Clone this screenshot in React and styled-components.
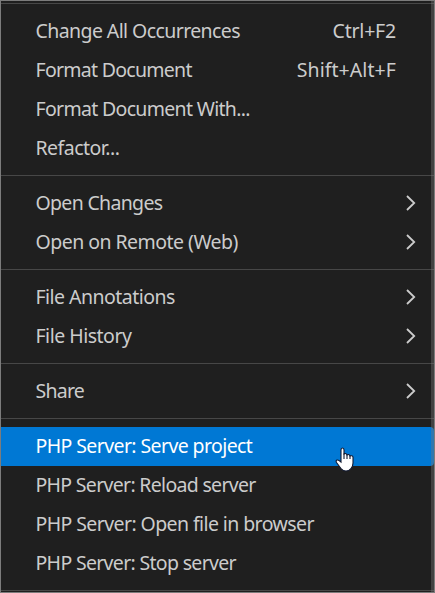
import React from "react";
import styled, { createGlobalStyle } from "styled-components";

const GlobalStyle = createGlobalStyle`
  body { margin: 0; background: #1f1f1f; overflow: hidden; }
  * { box-sizing: border-box; }
`;

const Menu = styled.div`
  position: relative;
  width: 435px;
  height: 593px;
  padding-top: 2px;
  border: 1px solid #7c7c7c;
  background: #1f1f1f;
  color: #cccccc;
  font-family: "Noto Sans", sans-serif;
  font-size: 19.5px;
`;

const Separator = styled.div`
  height: 1px;
  margin: 7px 0 8px;
  background: #474747;

  &:first-child { margin-top: 0; }
`;

const Row = styled.div`
  display: flex;
  align-items: center;
  justify-content: space-between;
  height: 39px;
  padding: 0 38px 2px 34.5px;
  line-height: 37px;
  white-space: nowrap;
  border-radius: 0 4px 4px 0;
  color: ${(p) => (p.$active ? "#ffffff" : "inherit")};
  background: ${(p) => (p.$active ? "#0078d4" : "transparent")};
`;

const Label = styled.span`
  letter-spacing: ${(p) => p.$tracking}px;
`;

const Arrow = styled.svg`
  width: 10px;
  height: 16px;
  margin-right: -20px;
  fill: none;
  stroke: #cccccc;
  stroke-width: 1.8;
`;

const Scrollbar = styled.div`
  position: absolute;
  top: 0;
  right: 0;
  bottom: 0;
  width: 3px;
  background: rgba(121, 121, 121, 0.4);
`;

const Pointer = styled.svg`
  position: absolute;
  left: 334px;
  top: 446px;
  width: 20px;
  height: 25px;
`;

const groups = [
  [
    { label: "Change All Occurrences", tracking: -0.59, keys: "Ctrl+F2", keyTracking: -0.2 },
    { label: "Format Document", tracking: -0.72, keys: "Shift+Alt+F", keyTracking: 0.07 },
    { label: "Format Document With...", tracking: -0.68 },
    { label: "Refactor...", tracking: -0.52 },
  ],
  [
    { label: "Open Changes", tracking: -0.68, submenu: true },
    { label: "Open on Remote (Web)", tracking: -0.53, submenu: true },
  ],
  [
    { label: "File Annotations", tracking: -0.53, submenu: true },
    { label: "File History", tracking: -0.5, submenu: true },
  ],
  [{ label: "Share", tracking: -0.75, submenu: true }],
  [
    { label: "PHP Server: Serve project", tracking: -0.6, active: true },
    { label: "PHP Server: Reload server", tracking: -0.69 },
    { label: "PHP Server: Open file in browser", tracking: -0.59 },
    { label: "PHP Server: Stop server", tracking: -0.68 },
  ],
];

function MenuItem({ item }) {
  return (
    <Row $active={item.active}>
      <Label $tracking={item.tracking}>{item.label}</Label>
      {item.keys && <Label $tracking={item.keyTracking}>{item.keys}</Label>}
      {item.submenu && (
        <Arrow viewBox="0 0 10 16"><path d="M1 1L8.2 8L1 15" /></Arrow>
      )}
    </Row>
  );
}

export default function App() {
  return (
    <>
      <GlobalStyle />
      <Menu>
        <Separator />
        {groups.map((items, i) => (
          <React.Fragment key={i}>
            {items.map((item) => <MenuItem key={item.label} item={item} />)}
            <Separator />
          </React.Fragment>
        ))}
        <Scrollbar />
        <Pointer viewBox="0 0 20 25">
          <path
            d="M6 15V3Q6 1 7.5 1Q9 1 9 3V7Q11.5 5.8 12 8Q14.5 6.8 15 9Q18 8 18 10.5V16Q18 19 16 21.5Q14 24 11 24Q8 24 6 21.5L1.5 15.5Q.5 13.5 2 13Q3.5 12.6 6 15Z"
            fill="#fff" stroke="#101830" strokeWidth="1.1"
          />
          <path d="M9 6.5V12M12 7.5V12M15 8.5V12" fill="none" stroke="#101830" strokeWidth="1.1" />
        </Pointer>
      </Menu>
    </>
  );
}
